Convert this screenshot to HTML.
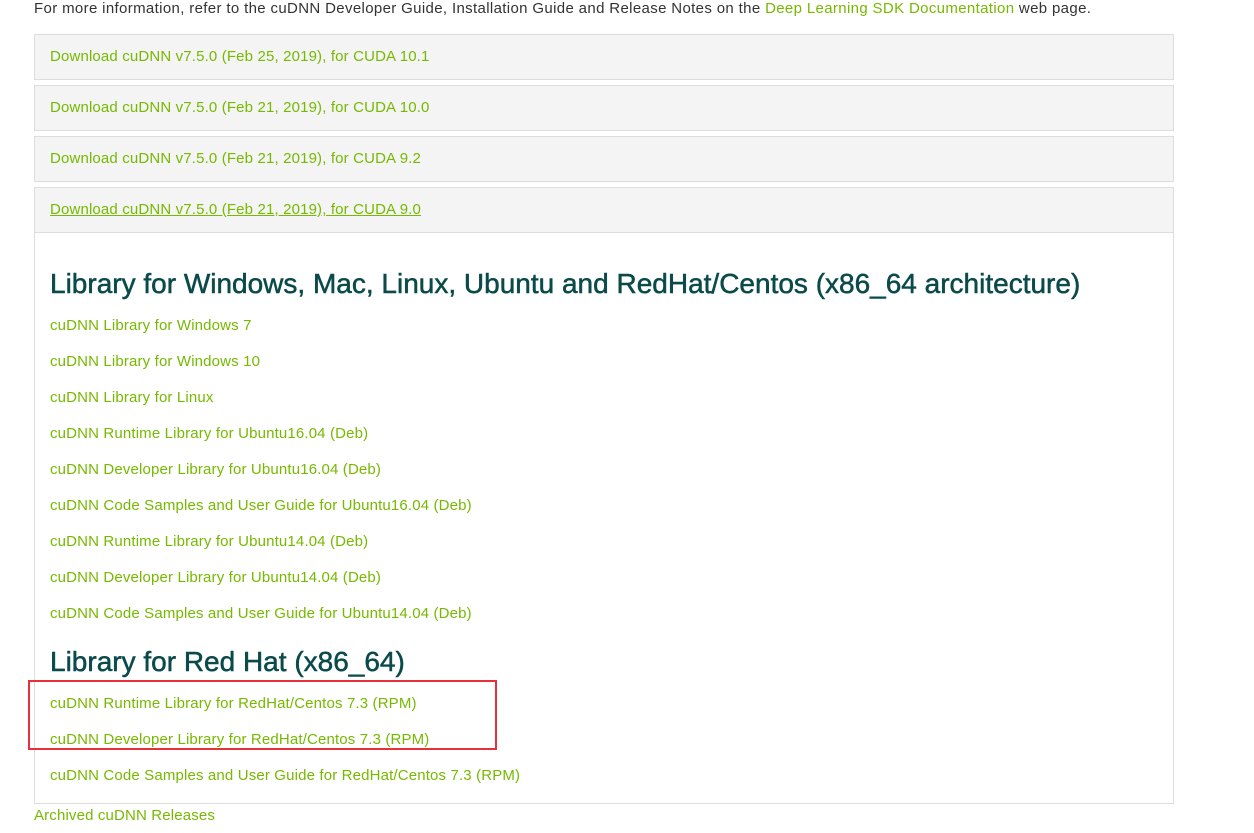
<!DOCTYPE html>
<html><head><style>
body{margin:0;background:#fff;font-family:"Liberation Sans",sans-serif;width:1254px;height:833px;overflow:hidden;position:relative}
.t{position:absolute;white-space:nowrap;font-size:15px;color:#76b900;letter-spacing:.15px}
.p{position:absolute;left:34px;width:1140px;background:#f4f4f4;border:1px solid #ddd;box-sizing:border-box}
h2{position:absolute;margin:0;left:50px;font-size:28px;font-weight:normal;color:#0a4a4a;white-space:nowrap;-webkit-text-stroke:.5px #0a4a4a}
</style></head><body>
<div class="t" style="left:34px;top:0;color:#333;letter-spacing:.35px">For more information, refer to the cuDNN Developer Guide, Installation Guide and Release Notes on the <span style="color:#76b900">Deep Learning SDK Documentation</span> web page.</div>
<div class="p" style="top:34px;height:46px"></div>
<div class="p" style="top:85px;height:46px"></div>
<div class="p" style="top:136px;height:46px"></div>
<div class="p" style="top:187px;height:617px;background:#fff"></div>
<div class="p" style="top:187px;height:46px"></div>
<div class="t" style="left:50px;top:48px">Download cuDNN v7.5.0 (Feb 25, 2019), for CUDA 10.1</div>
<div class="t" style="left:50px;top:99px">Download cuDNN v7.5.0 (Feb 21, 2019), for CUDA 10.0</div>
<div class="t" style="left:50px;top:150px">Download cuDNN v7.5.0 (Feb 21, 2019), for CUDA 9.2</div>
<div class="t" style="left:50px;top:201px;text-decoration:underline">Download cuDNN v7.5.0 (Feb 21, 2019), for CUDA 9.0</div>
<h2 style="top:268px">Library for Windows, Mac, Linux, Ubuntu and RedHat/Centos (x86_64 architecture)</h2>
<div class="t" style="left:50px;top:317px">cuDNN Library for Windows 7</div>
<div class="t" style="left:50px;top:353px">cuDNN Library for Windows 10</div>
<div class="t" style="left:50px;top:389px">cuDNN Library for Linux</div>
<div class="t" style="left:50px;top:425px">cuDNN Runtime Library for Ubuntu16.04 (Deb)</div>
<div class="t" style="left:50px;top:461px">cuDNN Developer Library for Ubuntu16.04 (Deb)</div>
<div class="t" style="left:50px;top:497px">cuDNN Code Samples and User Guide for Ubuntu16.04 (Deb)</div>
<div class="t" style="left:50px;top:533px">cuDNN Runtime Library for Ubuntu14.04 (Deb)</div>
<div class="t" style="left:50px;top:569px">cuDNN Developer Library for Ubuntu14.04 (Deb)</div>
<div class="t" style="left:50px;top:605px">cuDNN Code Samples and User Guide for Ubuntu14.04 (Deb)</div>
<h2 style="top:646px">Library for Red Hat (x86_64)</h2>
<div class="t" style="left:50px;top:695px">cuDNN Runtime Library for RedHat/Centos 7.3 (RPM)</div>
<div class="t" style="left:50px;top:731px">cuDNN Developer Library for RedHat/Centos 7.3 (RPM)</div>
<div class="t" style="left:50px;top:767px">cuDNN Code Samples and User Guide for RedHat/Centos 7.3 (RPM)</div>
<div class="t" style="left:34px;top:807px">Archived cuDNN Releases</div>
<div style="position:absolute;left:28px;top:680px;width:465px;height:66px;border:2px solid #e8303a"></div>
</body></html>
